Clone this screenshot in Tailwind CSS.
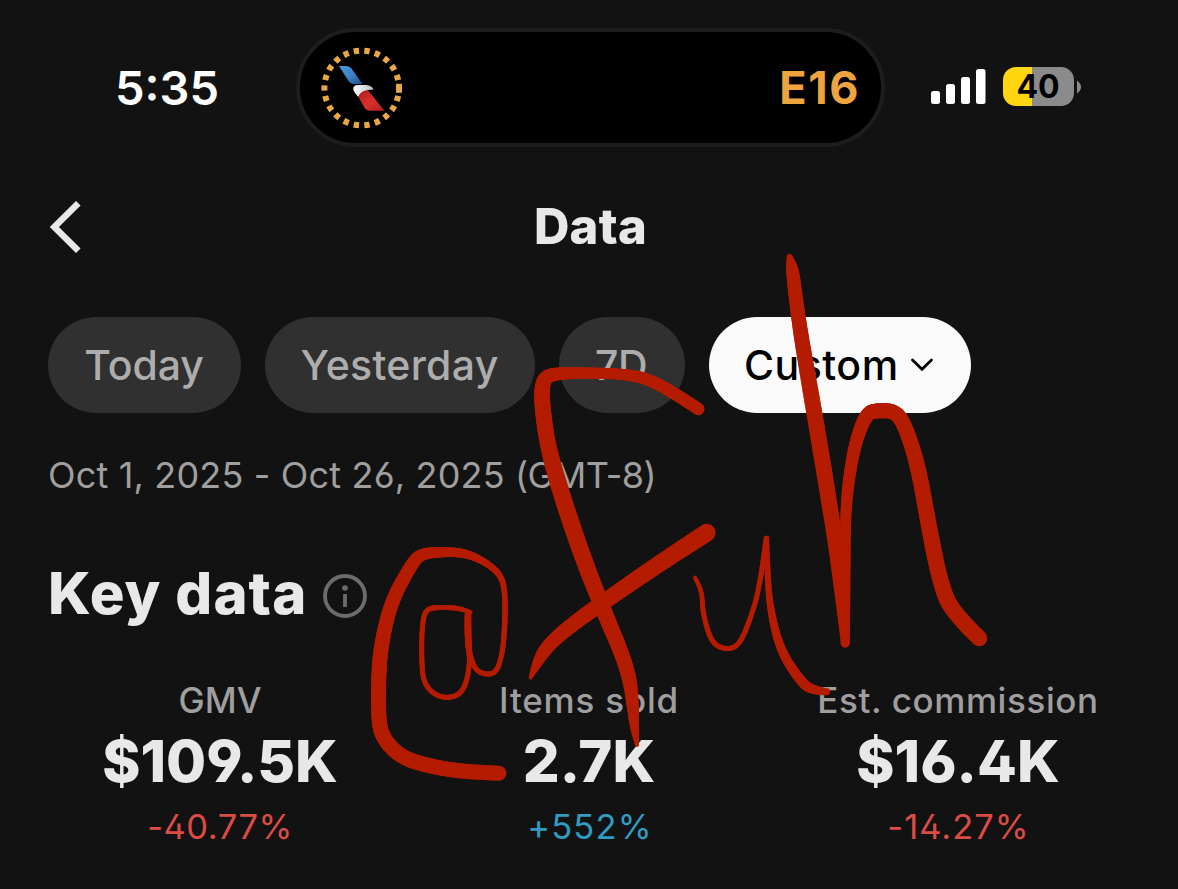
<!DOCTYPE html>
<html lang="en">
<head>
  <meta charset="UTF-8">
  <title>Data</title>
  <script src="https://cdn.jsdelivr.net/npm/@tailwindcss/browser@4"></script>
</head>
<body class="bg-[#121212] text-[#e8e8e8] font-[Inter,sans-serif] [font-feature-settings:'ss01'] overflow-hidden">
  <div class="relative w-[1178px] h-[889px] overflow-hidden whitespace-nowrap">

    <!-- Status bar -->
    <div class="flex items-center pt-7 pl-[115px]">
      <span class="w-[181px] text-[47px] leading-[119px] font-semibold text-white [font-feature-settings:normal]">5:35</span>

      <div class="flex items-center justify-between w-[589px] h-[119px] rounded-full bg-black border-4 border-[#1d1d1d] pl-5 pr-[21px]">
        <svg class="w-[84px] h-[84px]" viewBox="320 46 84 84" fill="none">
          <defs>
            <linearGradient id="blue" x1="0" y1="0" x2="1" y2="1">
              <stop offset="0" stop-color="#4a9bdc" />
              <stop offset=".55" stop-color="#3c7fc4" />
              <stop offset="1" stop-color="#1d4a8c" />
            </linearGradient>
            <linearGradient id="red" x1="0" y1="0" x2="1" y2="1">
              <stop offset="0" stop-color="#a81c20" />
              <stop offset=".5" stop-color="#d9302c" />
              <stop offset="1" stop-color="#b01f22" />
            </linearGradient>
            <linearGradient id="white" x1="0" y1="0" x2="1" y2="0">
              <stop offset="0" stop-color="#ffffff" />
              <stop offset="1" stop-color="#b9bec6" />
            </linearGradient>
          </defs>
          <circle cx="361.7" cy="88" r="37.3" stroke="#e8a848" stroke-width="6" pathLength="220" stroke-dasharray="5 5" stroke-dashoffset="2.5" />
          <path d="M399 83.8V92.8" stroke="#e8a848" stroke-width="6" />
          <path d="M339 66H346.5Q349.5 66 351.5 68.6L362.5 84H353Q350.5 84 348.5 81Z" fill="url(#blue)" />
          <path d="M353.3 88.5Q353.5 85.3 358 85H366Q372 85.5 373.5 89.5Q362 89.5 358.3 97Q353.3 91.5 353.3 88.5Z" fill="url(#white)" />
          <path d="M358.3 97Q360.5 90.5 368 90.2L384.5 110.8H370Q366.8 110.8 365 108.3Z" fill="url(#red)" />
        </svg>
        <span class="text-[45px] font-bold tracking-[1.6px] text-[#eda43e] [font-feature-settings:normal]">E16</span>
      </div>

      <svg class="w-[56px] h-[36px] ml-[46px] -mt-[2px]" viewBox="0 0 56 36" fill="#fff">
        <rect x="0" y="22" width="9" height="13" rx="2.5" />
        <rect x="15" y="15" width="9" height="20" rx="2.5" />
        <rect x="30" y="8" width="9" height="27" rx="2.5" />
        <rect x="45" y="0" width="9.5" height="35" rx="2.5" />
      </svg>
      <div class="flex items-center ml-4 -mt-[2px]">
        <div class="w-[71px] h-[39px] rounded-[13px] bg-linear-to-r from-[#ffd60f] from-41% to-[#8b8b8b] to-41% text-center text-[32px] leading-[39px] font-bold text-black [font-feature-settings:normal]"><span class="-ml-[1px]">40</span></div>
        <svg class="w-1 h-[14px] ml-[3px]" viewBox="0 0 4 14" fill="#8b8b8b"><path d="M0 0.5Q4 3.5 4 7T0 13.5Z" /></svg>
      </div>
    </div>

    <!-- Title bar -->
    <div class="grid grid-cols-3 items-center h-24 mt-8 px-12">
      <svg class="w-9 h-[56px]" viewBox="0 0 36 56" fill="none" stroke="#e8e8e8" stroke-width="6.5">
        <path d="M30.3 4.3L6.4 28L30.3 51.7" />
      </svg>
      <h1 class="text-center text-[49px] leading-[60px] pl-[3px] font-extrabold tracking-[0.3px]">Data</h1>
    </div>

    <!-- Range filters -->
    <div class="flex gap-6 mt-[42px] pl-12 text-[41px] leading-[96px] font-medium text-[#adadad] text-center">
      <div class="w-[193px] h-24 rounded-full bg-[#303030] tracking-[-0.1px] pr-[1px]">Today</div>
      <div class="w-[270px] h-24 rounded-full bg-[#303030] tracking-[0.3px] pr-[1px]">Yesterday</div>
      <div class="w-[126px] h-24 rounded-full bg-[#303030] tracking-[-0.4px] pr-[2px]">7D</div>
      <div class="flex items-center w-[262px] h-24 rounded-full bg-[#fafafa] text-black pl-[35px] tracking-[0.5px]">
        Custom
        <svg class="w-6 h-4 ml-[11px]" viewBox="0 0 24 16" fill="none" stroke="#000" stroke-width="2.8" stroke-linecap="round"><path d="M2.5 3L12 12.3L21.5 3" /></svg>
      </div>
    </div>

    <p class="mt-[42px] pl-12 text-[36px] leading-10 text-[#9f9f9f] tracking-[0.17px]">Oct 1, 2025 - Oct 26, 2025 <span class="tracking-[-0.6px]">(GMT-8)</span></p>

    <div class="flex items-center mt-[68px] pl-12">
      <h2 class="w-[260px] text-[58px] leading-[60px] font-extrabold tracking-[1.1px]">Key data</h2>
      <svg class="w-11 h-11 ml-[15px] mt-[6px]" viewBox="0 0 44 44" fill="none" stroke="#6c6c6c" stroke-width="3.8">
        <circle cx="22" cy="22" r="20" />
        <circle cx="22" cy="14" r="2.8" fill="#6c6c6c" stroke="none" />
        <path d="M22 20V33" />
      </svg>
    </div>

    <!-- Metrics -->
    <div class="grid grid-cols-3 mt-[55px] mx-[34px] text-center">
      <div class="pl-[2px]">
        <div class="text-[35px] leading-[44px] font-medium text-[#9f9f9f]">GMV</div>
        <div class="mt-1 text-[58px] leading-[70px] font-extrabold">$109.5K</div>
        <div class="mt-[11px] text-[34.5px] leading-10 text-[#dc4c44] tracking-[0.5px]">-40.77%</div>
      </div>
      <div>
        <div class="text-[35px] leading-[44px] font-medium text-[#9f9f9f] tracking-[0.8px]">Items sold</div>
        <div class="mt-1 text-[58px] leading-[70px] font-extrabold">2.7K</div>
        <div class="mt-[11px] text-[34.5px] leading-10 text-[#2f9cc0] tracking-[1.2px] pl-[2px]">+552%</div>
      </div>
      <div class="pr-[2px]">
        <div class="text-[35px] leading-[44px] font-medium text-[#9f9f9f] tracking-[0.6px]">Est. commission</div>
        <div class="mt-1 text-[58px] leading-[70px] font-extrabold">$16.4K</div>
        <div class="mt-[11px] text-[34.5px] leading-10 text-[#dc4c44] tracking-[1px] pl-[1px]">-14.27%</div>
      </div>
    </div>

    <!-- Handwriting over the screen -->
    <svg id="ink" class="absolute inset-0 w-[1178px] h-[889px]" viewBox="0 0 1178 889" fill="none" stroke="#b41c02" stroke-linecap="round"></svg>
  </div>

  <script>
    // Pen strokes: x, y, pen width
    const strokes = [
      [[470.5,612.3,4],[460,608,5],[440,607.3,5],[426,608.7,5],[422,625,5],[421.5,660,5],[423.7,684,5],[438,697.5,5],[457,697,5],[466,685,5],[469.5,665,5],[469.5,655,5],[468,640,7],[468,614.5,6.5]],
      [[468,615,6.5],[467.3,640,6.5],[471,660,5],[478,673,5],[495,675,5],[502,656.5,5],[505,626.5,5.5],[505,588,5.5],[499.3,573,6],[483,560.5,7],[463,552.5,9],[440,552,10],[420,554,12],[410.5,566,13],[392,600,14],[382.5,637,14.5],[378.6,670,15],[378.3,722,15],[384,740,15],[402,758,15],[433,767,15],[466.7,772,15],[499,773.3,15]],
      [[698.3,409,12.5],[676.7,394.5,12.5],[646.7,378,12],[620,373.8,11],[593,373,11],[563,373,12],[545,376,14],[541.5,390,15.5],[543,413,16],[548,447,16],[560,490,17],[582.5,557,17],[606,616.5,16],[621.7,653,15],[630,680,14.5],[632.9,706.5,12],[634.7,730,9],[637,745,4]],
      [[706.7,532.7,18],[660,563,17],[606.5,600,16],[576.7,621,15],[551,642,14],[538,660,12],[530.7,677.5,4]],
      [[695,577.7,4],[702,590,4.5],[702.4,610,5],[709,636,5],[718,648,5],[737,649,5],[749,623.3,5],[760,586.7,5],[766.4,538.5,5.5]],
      [[766.4,538.5,5.5],[767.6,586.7,6],[773,623,7.5],[782,653,9],[799,679,10],[811,690.5,10],[826.7,691.7,7]],
      [[789.3,256,3],[792,265,13],[796,300,14],[801.7,340,15],[813.3,406.7,16],[827.3,490,16],[835,540,15],[841,597,12],[845.3,643,9]],
      [[845.3,643,9],[845.5,580,10],[845.3,513,11],[850,470,12],[857,436.7,13],[867,413,14],[877,410.5,15],[895,411,15],[905,425,15],[918.5,467,15.5],[930,533,16],[940.7,584,16],[952,612,16],[979.3,638.3,16]]
    ];

    const svg = document.getElementById('ink');
    const mid = (a, b) => a.map((v, i) => (v + b[i]) / 2);

    // Quadratic curves between midpoints keep the line smooth
    for (const pts of strokes) {
      const end = pts.length - 1;
      let last = pts[0];
      for (let i = 1; i < end; i++) {
        const a = i === 1 ? pts[0] : mid(pts[i - 1], pts[i]);
        const b = pts[i];
        const c = i === end - 1 ? pts[end] : mid(pts[i], pts[i + 1]);
        for (let s = 1; s <= 12; s++) {
          const t = s / 12;
          const next = a.map((v, k) => (1 - t) * (1 - t) * v + 2 * t * (1 - t) * b[k] + t * t * c[k]);
          const line = document.createElementNS('http://www.w3.org/2000/svg', 'line');
          line.setAttribute('x1', last[0]);
          line.setAttribute('y1', last[1]);
          line.setAttribute('x2', next[0]);
          line.setAttribute('y2', next[1]);
          line.setAttribute('stroke-width', next[2]);
          svg.appendChild(line);
          last = next;
        }
      }
    }
  </script>
</body>
</html>
